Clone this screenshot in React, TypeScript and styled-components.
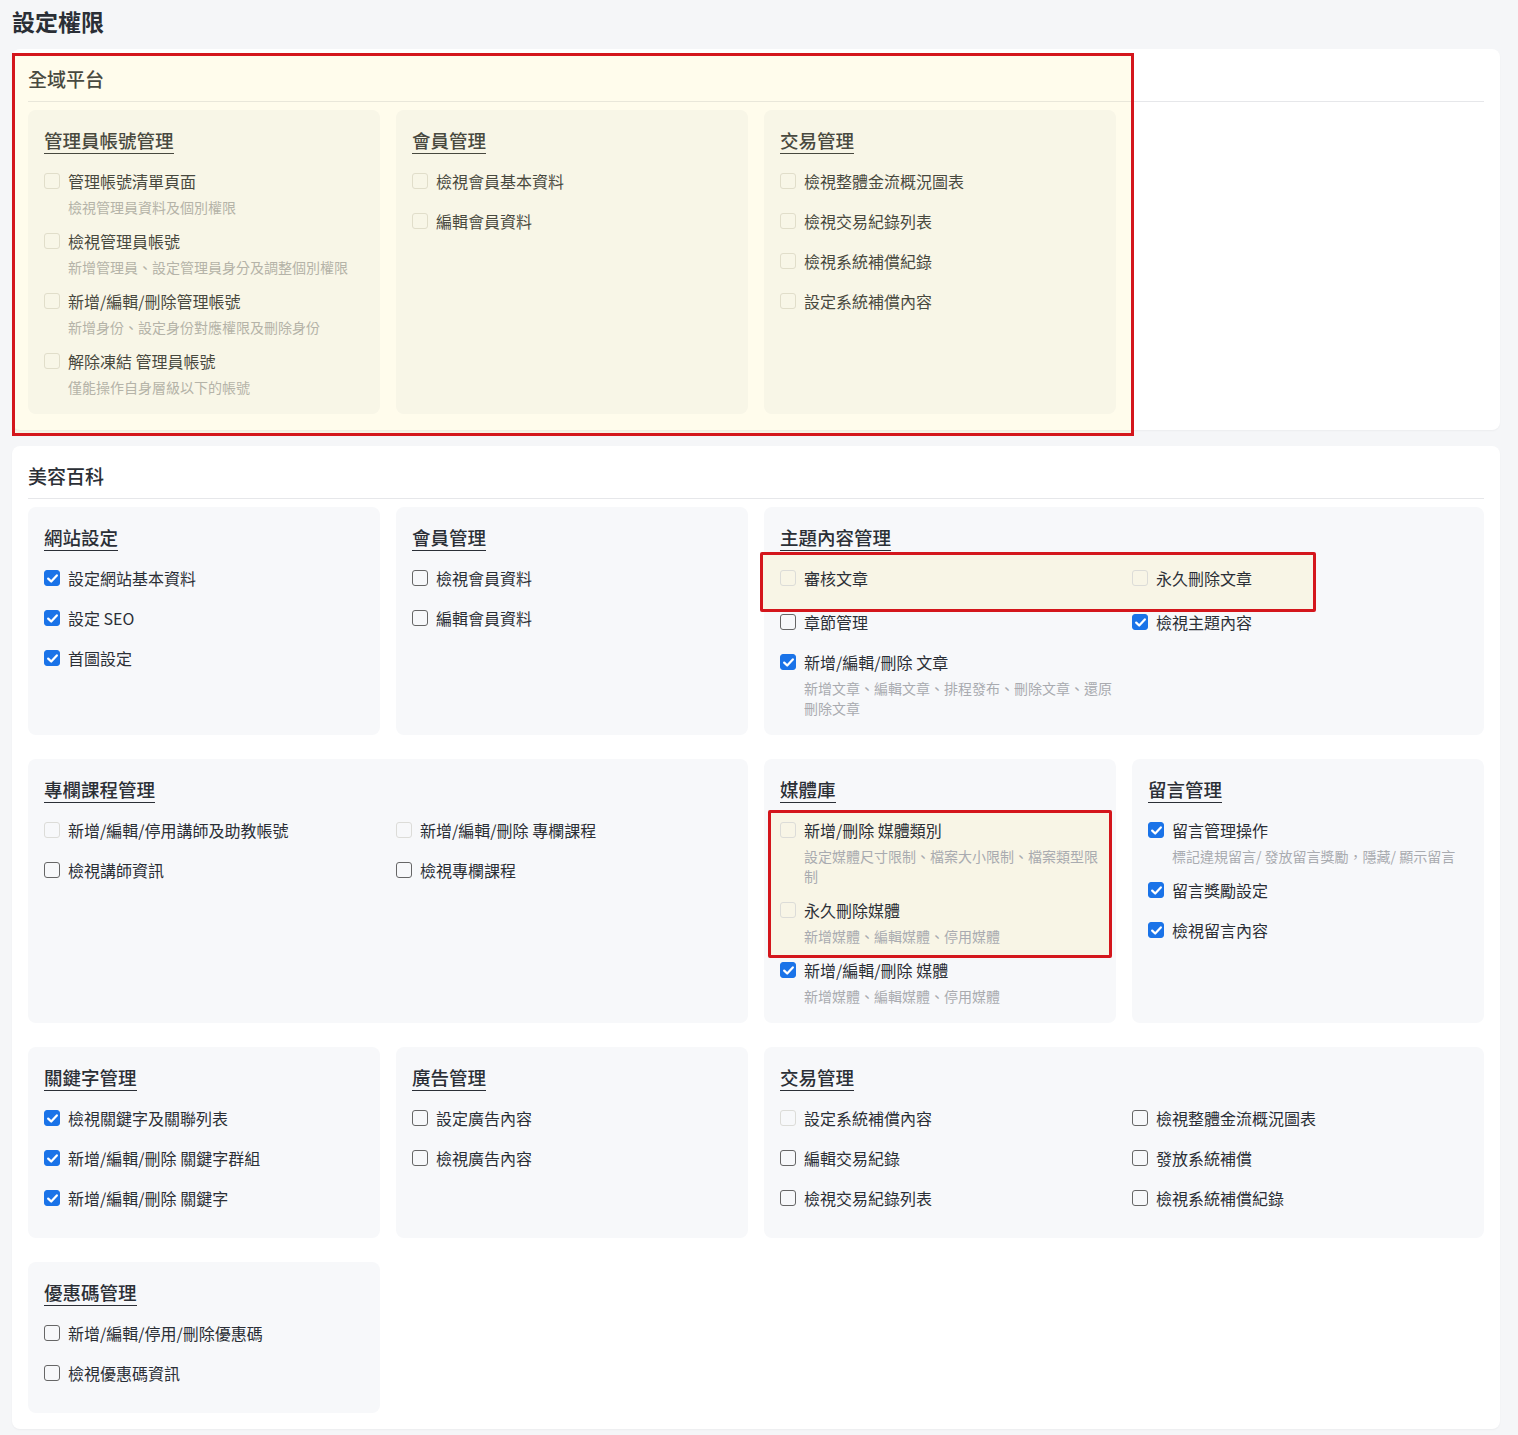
import React from 'react';
import styled, { createGlobalStyle } from 'styled-components';

const GlobalStyle = createGlobalStyle`
  body {
    margin: 0;
    background: #f5f6f8;
    font-family: "Noto Sans CJK TC", "Noto Sans", sans-serif;
    color: #2b2f36;
  }
`;

type State = 'on' | 'off' | 'dis';
type Item = { label: string; desc?: string; state: State };
type Hl = { from: number; to: number; width: number; tight?: boolean };
type Group = { title: string; span?: number; cols?: number; items: Item[]; hl?: Hl };

const Page = styled.div`
  padding: 2px 18px 8px 12px;
  display: flex;
  flex-direction: column;
  gap: 16px;
`;

const Title = styled.h1`
  margin: 0 0 -7px;
  font-size: 23px;
  font-weight: 700;
  line-height: 38px;
`;

const Card = styled.section`
  position: relative;
  background: #fff;
  border-radius: 8px;
  padding: 16px 16px 16px;
  box-shadow: 0 1px 2px rgba(0, 0, 0, 0.04);
`;

const CardHead = styled.h2`
  margin: 0 0 8px;
  font-size: 19px;
  font-weight: 500;
  line-height: 28px;
  padding-bottom: 8px;
  border-bottom: 1px solid #e6e7ea;
`;

const Grid = styled.div`
  display: grid;
  grid-template-columns: repeat(4, 352px);
  column-gap: 16px;
  row-gap: 24px;
`;

const Box = styled.div<{ $span: number }>`
  grid-column: span ${p => p.$span};
  background: #f7f8fa;
  border-radius: 8px;
  padding: 17px 16px 16px;
`;

const GroupTitle = styled.h3`
  margin: 0 0 11px;
  font-size: 18.5px;
  font-weight: 500;
  line-height: 26px;
  display: inline-block;
  border-bottom: 1.5px solid #2b2f36;
`;

const Items = styled.div<{ $cols: number }>`
  display: grid;
  grid-template-columns: repeat(${p => p.$cols}, 1fr);
  column-gap: 16px;
  align-items: start;
`;

const Row = styled.label`
  display: flex;
  gap: 8px;
  padding: 6px 0 14px;
`;

const Check = styled.span<{ $s: State }>`
  flex: none;
  width: 16px;
  height: 16px;
  margin-top: 2px;
  box-sizing: border-box;
  border-radius: 3px;
  border: 1.5px solid ${p => (p.$s === 'on' ? '#1a73e8' : p.$s === 'dis' ? '#dcdcd8' : '#666')};
  background: ${p => (p.$s === 'on' ? '#1a73e8' : 'transparent')};
  display: flex;
  align-items: center;
  justify-content: center;
`;

const Label = styled.div`
  font-size: 16px;
  line-height: 20px;
`;

const Desc = styled.div`
  font-size: 14px;
  line-height: 20px;
  color: #a9abb0;
  margin-top: 6px;
  margin-bottom: -13px;
  & + * {
    margin-top: 0;
  }
`;

const DescWrap = styled.div`
  & > ${Desc} {
    margin-bottom: -6px;
  }
`;

const Mark = styled.div<{ $w: number; $cols: number; $tight?: boolean }>`
  grid-column: 1 / -1;
  width: ${p => p.$w}px;
  margin: ${p => (p.$tight ? '-4px -12px -4px' : '-10px -20px -6px')};
  padding: ${p => (p.$tight ? '1px 9px' : '7px 17px')};
  box-sizing: border-box;
  border: 3px solid #d4161c;
  border-radius: 2px;
  background: #f8f5e6;
  display: grid;
  grid-template-columns: ${p => (p.$cols === 2 ? '352px 1fr' : '1fr')};
`;

const Overlay = styled.div`
  position: absolute;
  left: 0;
  top: 4px;
  bottom: -6px;
  width: 1122px;
  box-sizing: border-box;
  border: 3px solid #d4161c;
  background: rgba(255, 236, 120, 0.14);
  pointer-events: none;
`;

const Tick = () => (
  <svg width="11" height="9" viewBox="0 0 11 9">
    <path d="M1.2 4.6 L4.2 7.5 L9.8 1.4" fill="none" stroke="#fff" strokeWidth="2.2" strokeLinecap="round" strokeLinejoin="round" />
  </svg>
);

const Entry = ({ it, last }: { it: Item; last?: boolean }) => {
  const text = (
    <>
      <Label>{it.label}</Label>
      {it.desc && <Desc>{it.desc}</Desc>}
    </>
  );
  return (
    <Row>
      <Check $s={it.state}>{it.state === 'on' && <Tick />}</Check>
      {last ? <div>{text}</div> : <DescWrap>{text}</DescWrap>}
    </Row>
  );
};

const GroupBox = ({ g }: { g: Group }) => {
  const cols = g.cols ?? 1;
  const n = g.items.length;
  const nodes: React.ReactNode[] = [];
  g.items.forEach((it, i) => {
    if (g.hl && i === g.hl.from) {
      nodes.push(
        <Mark key={'m' + i} $w={g.hl.width} $cols={cols} $tight={g.hl.tight}>
          {g.items.slice(g.hl.from, g.hl.to + 1).map((x, j) => <Entry key={j} it={x} />)}
        </Mark>
      );
    }
    if (g.hl && i >= g.hl.from && i <= g.hl.to) return;
    nodes.push(<Entry key={i} it={it} last={i === n - 1} />);
  });
  return (
    <Box $span={g.span ?? 1}>
      <GroupTitle>{g.title}</GroupTitle>
      <Items $cols={cols}>{nodes}</Items>
    </Box>
  );
};

const d = (label: string, desc?: string): Item => ({ label, desc, state: 'dis' });
const on = (label: string, desc?: string): Item => ({ label, desc, state: 'on' });
const off = (label: string, desc?: string): Item => ({ label, desc, state: 'off' });

const platform: Group[] = [
  {
    title: '管理員帳號管理',
    items: [
      d('管理帳號清單頁面', '檢視管理員資料及個別權限'),
      d('檢視管理員帳號', '新增管理員、設定管理員身分及調整個別權限'),
      d('新增/編輯/刪除管理帳號', '新增身份、設定身份對應權限及刪除身份'),
      d('解除凍結 管理員帳號', '僅能操作自身層級以下的帳號'),
    ],
  },
  { title: '會員管理', items: [d('檢視會員基本資料'), d('編輯會員資料')] },
  { title: '交易管理', items: [d('檢視整體金流概況圖表'), d('檢視交易紀錄列表'), d('檢視系統補償紀錄'), d('設定系統補償內容')] },
];

const beauty: Group[] = [
  { title: '網站設定', items: [on('設定網站基本資料'), on('設定 SEO'), on('首圖設定')] },
  { title: '會員管理', items: [off('檢視會員資料'), off('編輯會員資料')] },
  {
    title: '主題內容管理',
    span: 2,
    cols: 2,
    hl: { from: 0, to: 1, width: 556 },
    items: [
      d('審核文章'),
      d('永久刪除文章'),
      off('章節管理'),
      on('檢視主題內容'),
      on('新增/編輯/刪除 文章', '新增文章、編輯文章、排程發布、刪除文章、還原刪除文章'),
    ],
  },
  {
    title: '專欄課程管理',
    span: 2,
    cols: 2,
    items: [d('新增/編輯/停用講師及助教帳號'), d('新增/編輯/刪除 專欄課程'), off('檢視講師資訊'), off('檢視專欄課程')],
  },
  {
    title: '媒體庫',
    hl: { from: 0, to: 1, width: 344, tight: true },
    items: [
      d('新增/刪除 媒體類別', '設定媒體尺寸限制、檔案大小限制、檔案類型限制'),
      d('永久刪除媒體', '新增媒體、編輯媒體、停用媒體'),
      on('新增/編輯/刪除 媒體', '新增媒體、編輯媒體、停用媒體'),
    ],
  },
  {
    title: '留言管理',
    items: [on('留言管理操作', '標記違規留言/ 發放留言獎勵，隱藏/ 顯示留言'), on('留言獎勵設定'), on('檢視留言內容')],
  },
  { title: '關鍵字管理', items: [on('檢視關鍵字及關聯列表'), on('新增/編輯/刪除 關鍵字群組'), on('新增/編輯/刪除 關鍵字')] },
  { title: '廣告管理', items: [off('設定廣告內容'), off('檢視廣告內容')] },
  {
    title: '交易管理',
    span: 2,
    cols: 2,
    items: [d('設定系統補償內容'), off('檢視整體金流概況圖表'), off('編輯交易紀錄'), off('發放系統補償'), off('檢視交易紀錄列表'), off('檢視系統補償紀錄')],
  },
  { title: '優惠碼管理', items: [off('新增/編輯/停用/刪除優惠碼'), off('檢視優惠碼資訊')] },
];

export default function App() {
  return (
    <>
      <GlobalStyle />
      <Page>
        <Title>設定權限</Title>
        <Card>
          <CardHead>全域平台</CardHead>
          <Grid>{platform.map((g, i) => <GroupBox key={i} g={g} />)}</Grid>
          <Overlay />
        </Card>
        <Card>
          <CardHead>美容百科</CardHead>
          <Grid>{beauty.map((g, i) => <GroupBox key={i} g={g} />)}</Grid>
        </Card>
      </Page>
    </>
  );
}
